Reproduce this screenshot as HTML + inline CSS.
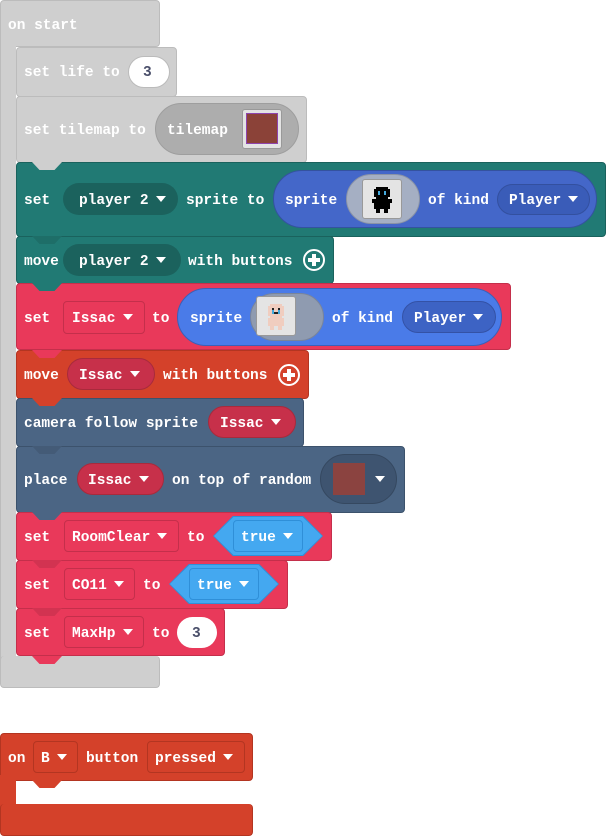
<!DOCTYPE html>
<html><head><meta charset="utf-8"><style>
*{margin:0;padding:0;box-sizing:border-box}
body{width:606px;height:837px;background:#fff;position:relative;overflow:hidden;font-family:"Liberation Mono",monospace;font-weight:bold;font-size:14.5px;color:#fff}
div,span{position:absolute}
.b{border-radius:4px}
.t{white-space:nowrap;line-height:18px;height:18px;margin-top:1px}
.ar{display:inline-block;width:0;height:0;border-left:5px solid transparent;border-right:5px solid transparent;border-top:6px solid #fff;vertical-align:middle;margin-left:7px;position:relative;top:-1px}
.tab{width:30px;height:8px;clip-path:polygon(0 0,100% 0,75% 100%,25% 100%)}
</style></head><body>
<!-- on start -->
<div class="b" style="left:0;top:0;width:160px;height:47px;background:#cfcfcf;border:1px solid #bcbcbc"></div>
<div style="left:0;top:40px;width:16px;height:640px;background:#cfcfcf;border-left:1px solid #bcbcbc"></div>
<div class="b" style="left:0;top:656px;width:160px;height:32px;background:#cfcfcf;border:1px solid #bcbcbc;border-top:none"></div>
<span class="t" style="left:8px;top:16px">on start</span>

<!-- set life -->
<div class="b" style="left:16px;top:47px;width:161px;height:50px;background:#cfcfcf;border:1px solid #bcbcbc"></div>
<span class="t" style="left:24px;top:63px">set life to</span>
<div style="left:128px;top:56px;width:42px;height:32px;border-radius:16px;background:#fff;border:1px solid #bbb"></div>
<span class="t" style="left:143px;top:63px;color:#4a4f6a">3</span>

<!-- set tilemap -->
<div class="b" style="left:16px;top:96px;width:291px;height:67px;background:#cfcfcf;border:1px solid #bcbcbc"></div>
<span class="t" style="left:24px;top:121px">set tilemap to</span>
<div style="left:155px;top:103px;width:144px;height:52px;border-radius:26px;background:#adadad;border:1px solid #9e9e9e"></div>
<span class="t" style="left:167px;top:121px">tilemap</span>
<div style="left:242px;top:109px;width:40px;height:40px;border-radius:3px;background:#e4e4e4;border:1px solid #999"></div>
<div style="left:246px;top:113px;width:32px;height:31px;background:#8b4238;border:1px solid #8e44ad"></div>

<!-- set player 2 sprite -->
<div class="b" style="left:16px;top:162px;width:590px;height:75px;background:#217a74;border:1px solid #1a625d"></div>
<div class="tab" style="left:32px;top:162px;background:#cfcfcf"></div>
<span class="t" style="left:24px;top:191px">set</span>
<div style="left:63px;top:183px;width:115px;height:32px;border-radius:16px;background:#1b625d"></div>
<span class="t" style="left:79px;top:191px">player 2<i class="ar"></i></span>
<span class="t" style="left:186px;top:191px">sprite to</span>
<div style="left:273px;top:170px;width:324px;height:58px;border-radius:29px;background:#4467c9;border:1px solid #34529f"></div>
<span class="t" style="left:285px;top:191px">sprite</span>
<div style="left:346px;top:174px;width:74px;height:50px;border-radius:25px;background:#a5afc3;border:1px solid #8a93a6"></div>
<div style="left:362px;top:179px;width:40px;height:40px;border-radius:3px;background:#e4e4e4;border:1px solid #999"></div>
<svg style="position:absolute;left:366px;top:183px" width="32" height="32" viewBox="0 0 16 16"><path d="M5 2h6v1h1v4h-1v1h-6v-1h-1v-4h1z M3 8h10v2h-1v3h-1v2h-2v-2h-2v2h-2v-2h-1v-3h-1z" fill="#000"/><rect x="6" y="4" width="1" height="2" fill="#4ad"/><rect x="9" y="4" width="1" height="2" fill="#4ad"/></svg>
<span class="t" style="left:428px;top:191px">of kind</span>
<div style="left:497px;top:184px;width:93px;height:31px;border-radius:16px;background:#3a5cb8;border:1px solid #33509f"></div>
<span class="t" style="left:509px;top:191px">Player<i class="ar"></i></span>

<!-- move player 2 -->
<div class="b" style="left:16px;top:236px;width:318px;height:48px;background:#217a74;border:1px solid #1a625d"></div>
<div class="tab" style="left:32px;top:236px;background:#217a74;filter:brightness(.9)"></div>
<span class="t" style="left:24px;top:252px">move</span>
<div style="left:63px;top:244px;width:118px;height:32px;border-radius:16px;background:#1b625d"></div>
<span class="t" style="left:79px;top:252px">player 2<i class="ar"></i></span>
<span class="t" style="left:188px;top:252px">with buttons</span>
<div style="left:303px;top:249px;width:22px;height:22px;border-radius:50%;border:2px solid #fff"></div>
<div style="left:308px;top:258px;width:12px;height:4px;background:#fff"></div>
<div style="left:312px;top:254px;width:4px;height:12px;background:#fff"></div>

<!-- set Issac sprite -->
<div class="b" style="left:16px;top:283px;width:495px;height:67px;background:#e9395a;border:1px solid #c42f4b"></div>
<div class="tab" style="left:32px;top:283px;background:#217a74"></div>
<span class="t" style="left:24px;top:309px">set</span>
<div style="left:63px;top:301px;width:82px;height:33px;border-radius:4px;background:#e9395a;border:1px solid #c42f4b"></div>
<span class="t" style="left:72px;top:309px">Issac<i class="ar"></i></span>
<span class="t" style="left:152px;top:309px">to</span>
<div style="left:177px;top:288px;width:325px;height:58px;border-radius:29px;background:#4a7be8;border:1px solid #3a60b8"></div>
<span class="t" style="left:190px;top:309px">sprite</span>
<div style="left:250px;top:293px;width:74px;height:48px;border-radius:24px;background:#8f9bb0;border:1px solid #7a859a"></div>
<div style="left:256px;top:296px;width:40px;height:40px;border-radius:3px;background:#e4e4e4;border:1px solid #999"></div>
<svg style="position:absolute;left:260px;top:300px" width="32" height="32" viewBox="0 0 16 16"><path d="M5 2h6v1h1v5h-1v1h-6v-1h-1v-5h1z M4 9h8v4h-1v2h-2v-2h-2v2h-2v-2h-1z" fill="#f0cdbf"/><rect x="6" y="4" width="1" height="1" fill="#222"/><rect x="9" y="4" width="1" height="1" fill="#222"/><rect x="6" y="5" width="1" height="2" fill="#4ad"/><rect x="9" y="5" width="1" height="2" fill="#4ad"/><rect x="7" y="6" width="2" height="1" fill="#222"/></svg>
<span class="t" style="left:332px;top:309px">of kind</span>
<div style="left:402px;top:301px;width:94px;height:32px;border-radius:16px;background:#3d63c4;border:1px solid #3452a6"></div>
<span class="t" style="left:414px;top:309px">Player<i class="ar"></i></span>

<!-- move Issac -->
<div class="b" style="left:16px;top:350px;width:293px;height:49px;background:#d4412a;border:1px solid #b33521"></div>
<div class="tab" style="left:32px;top:350px;background:#e9395a"></div>
<span class="t" style="left:24px;top:366px">move</span>
<div style="left:67px;top:358px;width:88px;height:32px;border-radius:16px;background:#c7304a;border:1px solid #a82a3c"></div>
<span class="t" style="left:79px;top:366px">Issac<i class="ar"></i></span>
<span class="t" style="left:163px;top:366px">with buttons</span>
<div style="left:278px;top:364px;width:22px;height:22px;border-radius:50%;border:2px solid #fff"></div>
<div style="left:283px;top:373px;width:12px;height:4px;background:#fff"></div>
<div style="left:287px;top:369px;width:4px;height:12px;background:#fff"></div>

<!-- camera follow -->
<div class="b" style="left:16px;top:398px;width:288px;height:49px;background:#4b6584;border:1px solid #3c526c"></div>
<div class="tab" style="left:32px;top:398px;background:#d4412a"></div>
<span class="t" style="left:24px;top:414px">camera follow sprite</span>
<div style="left:208px;top:406px;width:88px;height:32px;border-radius:16px;background:#c7304a;border:1px solid #a82a3c"></div>
<span class="t" style="left:220px;top:414px">Issac<i class="ar"></i></span>

<!-- place -->
<div class="b" style="left:16px;top:446px;width:389px;height:67px;background:#4b6584;border:1px solid #3c526c"></div>
<div class="tab" style="left:32px;top:446px;background:#4b6584;filter:brightness(.9)"></div>
<span class="t" style="left:24px;top:471px">place</span>
<div style="left:77px;top:463px;width:87px;height:32px;border-radius:16px;background:#c7304a;border:1px solid #a82a3c"></div>
<span class="t" style="left:88px;top:471px">Issac<i class="ar"></i></span>
<span class="t" style="left:172px;top:471px">on top of random</span>
<div style="left:320px;top:454px;width:77px;height:50px;border-radius:25px;background:#3e5470;border:1px solid #354860"></div>
<div style="left:333px;top:463px;width:32px;height:32px;background:#8b4340"></div>
<span class="t" style="left:368px;top:471px"><i class="ar"></i></span>

<!-- set RoomClear -->
<div class="b" style="left:16px;top:512px;width:316px;height:49px;background:#e9395a;border:1px solid #c42f4b"></div>
<div class="tab" style="left:32px;top:512px;background:#4b6584"></div>
<span class="t" style="left:24px;top:528px">set</span>
<div style="left:64px;top:520px;width:115px;height:32px;border-radius:4px;border:1px solid #c42f4b"></div>
<span class="t" style="left:72px;top:528px">RoomClear<i class="ar"></i></span>
<span class="t" style="left:187px;top:528px">to</span>
<div style="left:213px;top:516px;width:110px;height:40px;background:#2f8fd8;clip-path:polygon(0 50%,18% 0,82% 0,100% 50%,82% 100%,18% 100%)"></div>
<div style="left:214px;top:517px;width:108px;height:38px;background:#44a8f0;clip-path:polygon(0 50%,18% 0,82% 0,100% 50%,82% 100%,18% 100%)"></div>
<div style="left:233px;top:520px;width:70px;height:32px;border-radius:4px;border:1px solid #2f8fd8"></div>
<span class="t" style="left:241px;top:528px">true<i class="ar"></i></span>

<!-- set CO11 -->
<div class="b" style="left:16px;top:560px;width:272px;height:49px;background:#e9395a;border:1px solid #c42f4b"></div>
<div class="tab" style="left:32px;top:560px;background:#e9395a;filter:brightness(.9)"></div>
<span class="t" style="left:24px;top:576px">set</span>
<div style="left:64px;top:568px;width:71px;height:32px;border-radius:4px;border:1px solid #c42f4b"></div>
<span class="t" style="left:72px;top:576px">CO11<i class="ar"></i></span>
<span class="t" style="left:143px;top:576px">to</span>
<div style="left:169px;top:564px;width:110px;height:40px;background:#2f8fd8;clip-path:polygon(0 50%,18% 0,82% 0,100% 50%,82% 100%,18% 100%)"></div>
<div style="left:170px;top:565px;width:108px;height:38px;background:#44a8f0;clip-path:polygon(0 50%,18% 0,82% 0,100% 50%,82% 100%,18% 100%)"></div>
<div style="left:189px;top:568px;width:70px;height:32px;border-radius:4px;border:1px solid #2f8fd8"></div>
<span class="t" style="left:197px;top:576px">true<i class="ar"></i></span>

<!-- set MaxHp -->
<div class="b" style="left:16px;top:608px;width:209px;height:48px;background:#e9395a;border:1px solid #c42f4b"></div>
<div class="tab" style="left:32px;top:608px;background:#e9395a;filter:brightness(.9)"></div>
<div class="tab" style="left:32px;top:656px;background:#e9395a"></div>
<span class="t" style="left:24px;top:624px">set</span>
<div style="left:64px;top:616px;width:80px;height:32px;border-radius:4px;border:1px solid #c42f4b"></div>
<span class="t" style="left:72px;top:624px">MaxHp<i class="ar"></i></span>
<span class="t" style="left:152px;top:624px">to</span>
<div style="left:177px;top:617px;width:40px;height:31px;border-radius:16px;background:#fff"></div>
<span class="t" style="left:192px;top:624px;color:#4a4f6a">3</span>

<!-- on B button -->
<div class="b" style="left:0;top:733px;width:253px;height:48px;background:#d4412a;border:1px solid #b33521"></div>
<div style="left:0;top:775px;width:16px;height:35px;background:#d4412a"></div>
<div class="b" style="left:0;top:804px;width:253px;height:32px;background:#d4412a;border:1px solid #b33521;border-top:none"></div>
<div class="tab" style="left:32px;top:780px;background:#d4412a"></div>
<span class="t" style="left:8px;top:749px">on</span>
<div style="left:33px;top:741px;width:45px;height:32px;border-radius:4px;border:1px solid #b33521"></div>
<span class="t" style="left:41px;top:749px">B<i class="ar"></i></span>
<span class="t" style="left:86px;top:749px">button</span>
<div style="left:147px;top:741px;width:98px;height:32px;border-radius:4px;border:1px solid #b33521"></div>
<span class="t" style="left:155px;top:749px">pressed<i class="ar"></i></span>
</body></html>
